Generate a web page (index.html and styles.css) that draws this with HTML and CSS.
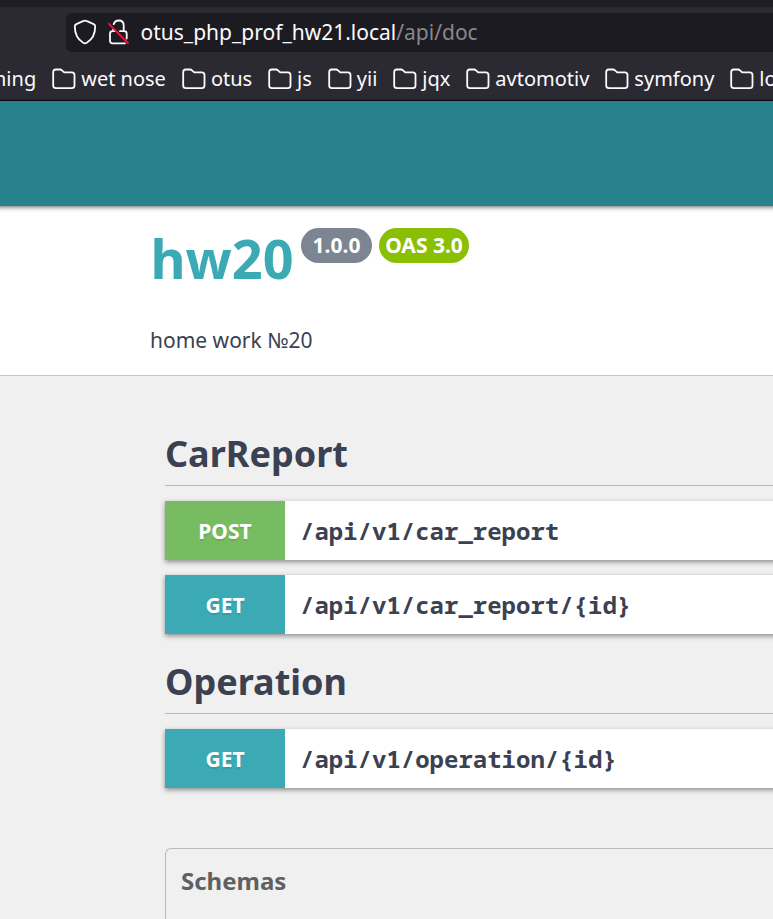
FILE: index.html
```html
<!DOCTYPE html>
<html lang="en">
<head>
<meta charset="utf-8">
<title>hw20</title>
<link rel="stylesheet" href="styles.css">
</head>
<body>
<svg class="defs" aria-hidden="true">
  <symbol id="folder" viewBox="0 0 24 22">
    <path d="M1.2 18V4Q1.2 1.5 3.7 1.5H8Q9.2 1.5 10 2.3L12.2 4.4H19.8Q22.5 4.4 22.5 7V17.6Q22.5 20.2 19.8 20.2H3.9Q1.2 20.2 1.2 17.5Z"/>
  </symbol>
</svg>
<header class="chrome">
  <div class="tabs"></div>
  <div class="urlbar">
    <svg class="shield" viewBox="0 0 24 26"><path d="M12 1.7Q13 1.7 14 2.2L20.7 5.1Q22.3 5.8 22.2 7.6Q22.2 18.8 13.8 23.8Q12 24.8 10.2 23.8Q1.8 18.8 1.8 7.6Q1.7 5.8 3.3 5.1L10 2.2Q11 1.7 12 1.7Z"/></svg>
    <svg class="lock" viewBox="0 0 22 26"><path d="M5.7 5.2Q6.8 1.5 10.8 1.5Q15.7 1.5 15.7 6.5V12.2M12 12.2H16.2Q18.7 12.2 18.7 14.7V19.5M17 24.3H4.5Q2 24.3 2 21.8V14.7Q2 12.2 4.5 12.2H6.8M5.2 10.5V12"/><path class="slash" d="M.5 4.6L19.9 24"/></svg>
    <span class="url">otus_php_prof_hw21.local<span class="path">/api/doc</span></span>
  </div>
  <nav class="bookmarks">
    <span class="cut">ning</span>
    <span class="bm"><svg><use href="#folder"/></svg>wet nose</span>
    <span class="bm"><svg><use href="#folder"/></svg>otus</span>
    <span class="bm"><svg><use href="#folder"/></svg>js</span>
    <span class="bm"><svg><use href="#folder"/></svg>yii</span>
    <span class="bm"><svg><use href="#folder"/></svg>jqx</span>
    <span class="bm"><svg><use href="#folder"/></svg>avtomotiv</span>
    <span class="bm"><svg><use href="#folder"/></svg>symfony</span>
    <span class="bm"><svg><use href="#folder"/></svg>lo</span>
  </nav>
</header>
<div class="banner"></div>
<section class="info">
  <div class="heading">
    <h1>hw20</h1>
    <span class="badge">1.0.0</span>
    <span class="badge oas">OAS 3.0</span>
  </div>
  <p>home work №20</p>
</section>
<main>
  <h2>CarReport</h2>
  <div class="op"><span class="method post">POST</span><span class="route">/api/v1/car_report</span></div>
  <div class="op"><span class="method">GET</span><span class="route">/api/v1/car_report/{id}</span></div>
  <h2>Operation</h2>
  <div class="op"><span class="method">GET</span><span class="route">/api/v1/operation/{id}</span></div>
  <section class="schemas"><h3>Schemas</h3></section>
</main>
</body>
</html>
```
FILE: styles.css
```css
* { box-sizing: border-box; }
body {
  margin: 0;
  height: 919px;
  overflow: hidden;
  display: flex;
  flex-direction: column;
  background: #f0f0f0;
  color: #3b4151;
  font-family: "Noto Sans", sans-serif;
}
h1, h2, h3, p { margin: 0; }
.defs { position: absolute; width: 0; height: 0; }
.chrome {
  flex: none;
  height: 101px;
  background: #2b2a33;
  border-bottom: 1px solid #0c0c0d;
  color: #fbfbfe;
  overflow: hidden;
}
.tabs { height: 7px; background: #1f1e25; }
.urlbar {
  display: flex;
  align-items: center;
  height: 39px;
  margin: 6px 0 0 66px;
  padding-left: 7px;
  border-radius: 6px 0 0 6px;
  background: #1c1b22;
  white-space: nowrap;
}
.urlbar svg, .bm svg {
  flex: none;
  fill: none;
  stroke: #fbfbfe;
  stroke-width: 1.8;
  stroke-linejoin: round;
  stroke-linecap: round;
}
.shield { width: 24px; height: 26px; margin-bottom: 1px; }
.lock { width: 22px; height: 26px; margin: 0 11px 1px 10.5px; }
.lock .slash { stroke: #f5103f; }
.url { font-size: 21px; line-height: 39px; }
.path { color: #87878c; }
.bookmarks {
  display: flex;
  align-items: center;
  height: 48px;
  margin-top: 3px;
  font-size: 20px;
  line-height: 28px;
  white-space: nowrap;
}
.cut { margin-left: -6px; }
.bm { display: flex; align-items: center; margin-left: 15.97px; }
.bm svg { width: 24px; height: 22px; margin-right: 5px; margin-bottom: 1px; }
.banner {
  flex: none;
  height: 105px;
  margin: 0 -10px;
  background: #27828e;
  box-shadow: 0 1px 5px rgba(0, 0, 0, .6);
  position: relative;
}
.info {
  flex: none;
  height: 170px;
  padding: 22px 0 0 150.5px;
  background: #fff;
  border-bottom: 1px solid #c4c4c4;
}
.heading { display: flex; align-items: flex-start; height: 96px; }
h1 { font-size: 54px; line-height: 60px; color: #3caab5; }
.badge {
  width: 71px;
  height: 35px;
  margin-left: 7.4px;
  border-radius: 18px;
  background: #7d8492;
  color: #fff;
  font-size: 21px;
  font-weight: 700;
  line-height: 34px;
  text-align: center;
  white-space: nowrap;
}
.badge.oas { width: 90px; margin-left: 7px; background: #89bf04; }
.info p { margin-left: -.5px; font-size: 21px; line-height: 32px; }
main { padding: 47px 0 0 165px; }
h2 {
  height: 63px;
  margin-bottom: 15px;
  border-bottom: 1px solid #b9babd;
  font-size: 36px;
  line-height: 62px;
}
.op {
  display: flex;
  height: 59px;
  margin: 0 -10px 15px 0;
  background: #fff;
  box-shadow: 0 2px 5px rgba(0, 0, 0, .42);
}
.op + h2 { margin-top: 17px; }
.method {
  width: 120px;
  background: #3caab5;
  color: #fff;
  font-size: 21px;
  font-weight: 700;
  line-height: 60px;
  text-align: center;
  text-shadow: 0 1.5px 0 rgba(0, 0, 0, .1);
}
.post { background: #78bc61; }
.route {
  padding-left: 15px;
  font: 700 24px/60px "Noto Sans Mono", "DejaVu Sans Mono", monospace;
}
.schemas {
  height: 71px;
  margin-top: 60px;
  padding: 15px;
  border: solid #b9babd;
  border-width: 1px 0 0 1px;
  border-radius: 6px 0 0 0;
}
h3 { font-size: 24px; line-height: 33px; color: #606060; }
```
